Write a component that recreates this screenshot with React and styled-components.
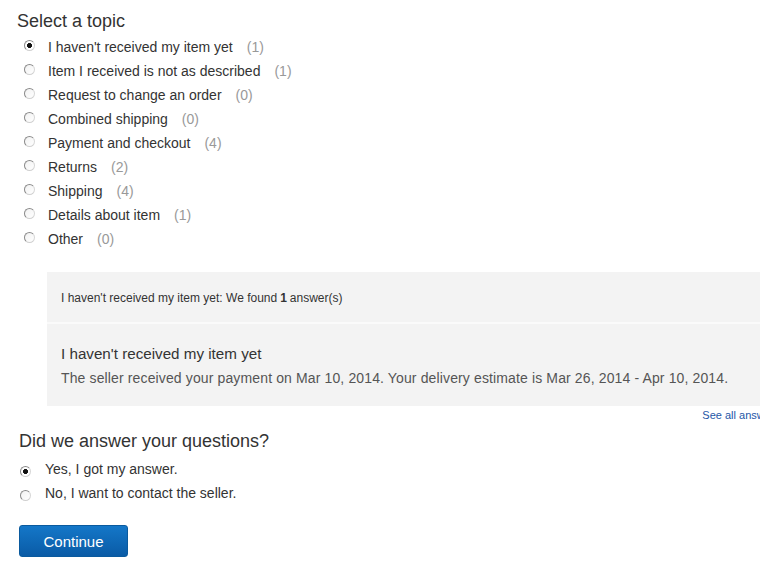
import React, { useState } from "react";
import styled, { createGlobalStyle } from "styled-components";

const GlobalStyle = createGlobalStyle`
  html, body {
    margin: 0;
    padding: 0;
    background: #fff;
    overflow: hidden;
  }
  body {
    font-family: "Liberation Sans", Arial, sans-serif;
    color: #333;
  }
`;

const topics = [
  { label: "I haven't received my item yet", count: 1 },
  { label: "Item I received is not as described", count: 1 },
  { label: "Request to change an order", count: 0 },
  { label: "Combined shipping", count: 0 },
  { label: "Payment and checkout", count: 4 },
  { label: "Returns", count: 2 },
  { label: "Shipping", count: 4 },
  { label: "Details about item", count: 1 },
  { label: "Other", count: 0 },
];

export default function App() {
  const [topic, setTopic] = useState(0);
  const [answered, setAnswered] = useState(0);

  return (
    <Page>
      <GlobalStyle />
      <TopicHeading>Select a topic</TopicHeading>
      <TopicList>
        {topics.map((t, i) => (
          <TopicRow key={t.label} onClick={() => setTopic(i)}>
            <Radio $checked={topic === i} />
            <TopicLabel>{t.label}</TopicLabel>
            <Count>({t.count})</Count>
          </TopicRow>
        ))}
      </TopicList>

      <Panel>
        <PanelHead>
          I haven't received my item yet: We found <b>1</b> answer(s)
        </PanelHead>
        <Answer>
          <AnswerTitle>I haven't received my item yet</AnswerTitle>
          <AnswerText>
            The seller received your payment on Mar 10, 2014. Your delivery
            estimate is Mar 26, 2014 - Apr 10, 2014.
          </AnswerText>
        </Answer>
      </Panel>
      <SeeAllRow>
        <SeeAll href="#">See all answers</SeeAll>
      </SeeAllRow>

      <Question>
        <QuestionHeading>Did we answer your questions?</QuestionHeading>
        <ChoiceRow onClick={() => setAnswered(0)}>
          <Radio $checked={answered === 0} />
          <ChoiceLabel>Yes, I got my answer.</ChoiceLabel>
        </ChoiceRow>
        <ChoiceRow onClick={() => setAnswered(1)}>
          <Radio $checked={answered === 1} />
          <ChoiceLabel>No, I want to contact the seller.</ChoiceLabel>
        </ChoiceRow>
        <ContinueButton>Continue</ContinueButton>
      </Question>
    </Page>
  );
}

const Page = styled.div`
  width: 780px;
  padding-top: 10px;
`;

const TopicHeading = styled.h2`
  margin: 0 0 0 17px;
  font-size: 18px;
  font-weight: normal;
  line-height: 22px;
  color: #333;
`;

const TopicList = styled.div`
  display: flex;
  flex-direction: column;
  padding: 3px 0 0 24px;
`;

const TopicRow = styled.label`
  display: flex;
  align-items: center;
  height: 24px;
  font-size: 14px;
  cursor: pointer;
`;

const Radio = styled.span`
  flex: none;
  box-sizing: border-box;
  width: 11px;
  height: 11px;
  margin-top: -3px;
  border-radius: 50%;
  border: 1px solid #8a8a8a;
  border-right-color: #d6d6d6;
  border-bottom-color: #d0d0d0;
  background: ${(p) =>
    p.$checked
      ? "radial-gradient(circle, #111 0 2.2px, #fff 2.8px)"
      : "linear-gradient(135deg, #f2f2f2, #fff)"};
`;

const TopicLabel = styled.span`
  margin-left: 13px;
  color: #333;
`;

const Count = styled.span`
  margin-left: 14px;
  color: #999;
`;

const Panel = styled.div`
  margin: 21px 0 0 47px;
  background: #f3f3f3;
  display: flex;
  flex-direction: column;
`;

const PanelHead = styled.div`
  height: 52px;
  box-sizing: border-box;
  display: flex;
  align-items: center;
  gap: 0 3px;
  padding: 2px 14px 0;
  font-size: 12px;
  color: #333;
  border-bottom: 2px solid #fafafa;

  b {
    font-weight: bold;
  }
`;

const Answer = styled.div`
  padding: 20px 14px 18px;
`;

const AnswerTitle = styled.div`
  font-size: 15.2px;
  line-height: 20px;
  color: #333;
`;

const AnswerText = styled.div`
  margin-top: 4px;
  font-size: 14px;
  letter-spacing: 0.13px;
  line-height: 20px;
  color: #555;
`;

const SeeAllRow = styled.div`
  display: flex;
  justify-content: flex-end;
  padding: 3px 0 0;
  height: 16px;
`;

const SeeAll = styled.a`
  font-size: 11px;
  line-height: 13px;
  color: #2557a7;
  text-decoration: none;
`;

const Question = styled.div`
  padding-left: 19px;
  display: flex;
  flex-direction: column;
  align-items: flex-start;
`;

const QuestionHeading = styled.h2`
  margin: 5px 0 5px;
  font-size: 18px;
  font-weight: normal;
  line-height: 22px;
  color: #333;
`;

const ChoiceRow = styled.label`
  display: flex;
  align-items: center;
  height: 24px;
  padding-left: 1px;
  font-size: 14px;
  cursor: pointer;

  ${Radio} {
    margin-top: 4px;
  }
`;

const ChoiceLabel = styled.span`
  margin-left: 14px;
  color: #333;
`;

const ContinueButton = styled.button`
  margin-top: 20px;
  width: 109px;
  height: 32px;
  border: 1px solid #0a5a9e;
  border-radius: 3px;
  background: linear-gradient(#1477c8, #0a5ba6);
  color: #fff;
  font-family: "Liberation Sans", Arial, sans-serif;
  font-size: 15px;
  cursor: pointer;
`;
